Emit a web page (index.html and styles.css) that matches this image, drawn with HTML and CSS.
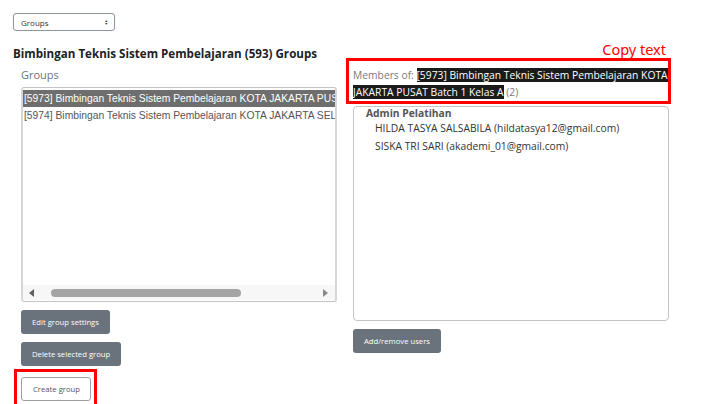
FILE: index.html
```html
<!DOCTYPE html>
<html lang="en">

<head>
    <meta charset="UTF-8">
    <meta name="viewport" content="width=device-width, initial-scale=1.0">
    <title>Groups</title>
    <link rel="stylesheet" href="styles.css">
</head>

<body>
    <div class="page">
        <div class="group-select">
            <span>Groups</span>
            <span class="updown">&#9650;<br>&#9660;</span>
        </div>

        <div class="columns">
            <div class="col-left">
                <h2 class="page-title">Bimbingan Teknis Sistem Pembelajaran (593) Groups</h2>
                <div class="col-label">Groups</div>
                <div class="listbox">
                    <div class="list-rows">
                        <div class="list-row selected">[5973] Bimbingan Teknis Sistem Pembelajaran KOTA JAKARTA PUSAT Batch 1 Kelas A (2)</div>
                        <div class="list-row">[5974] Bimbingan Teknis Sistem Pembelajaran KOTA JAKARTA SELATAN Batch 1 Kelas A (2)</div>
                    </div>
                    <div class="hscroll">
                        <span class="arrow-left"></span>
                        <span class="thumb"></span>
                        <span class="arrow-right"></span>
                    </div>
                </div>
                <div class="btn-stack">
                    <a href="#" class="btn btn-dark">Edit group settings</a>
                    <a href="#" class="btn btn-dark">Delete selected group</a>
                    <div class="mark">
                        <a href="#" class="btn btn-light">Create group</a>
                    </div>
                </div>
            </div>

            <div class="col-right">
                <div class="copy-note">Copy text</div>
                <div class="members-head">
                    Members of: <span class="hl">[5973] Bimbingan Teknis Sistem Pembelajaran KOTA JAKARTA PUSAT Batch 1 Kelas A</span> (2)
                </div>
                <div class="members-box">
                    <div class="role">Admin Pelatihan</div>
                    <div class="member">HILDA TASYA SALSABILA (hildatasya12@gmail.com)</div>
                    <div class="member">SISKA TRI SARI (akademi_01@gmail.com)</div>
                </div>
                <a href="#" class="btn btn-dark">Add/remove users</a>
            </div>
        </div>
    </div>
</body>

</html>
```

FILE: styles.css
```css
* {
    padding: 0;
    margin: 0;
    box-sizing: border-box;
    text-decoration: none;
}

body {
    font-family: "Open Sans", "Noto Sans", sans-serif;
    color: #1d2125;
    background: #fff;
    overflow: hidden;
}

.page {
    padding: 13px 0 0 13px;
}

.group-select {
    display: flex;
    align-items: center;
    justify-content: space-between;
    width: 102px;
    height: 18px;
    padding: 0 6px 0 7px;
    border: 1px solid #8f959e;
    border-radius: 3px;
    font-size: 8px;
    color: #333;
}

.updown {
    font-size: 3.5px;
    line-height: 3.5px;
    color: #333;
}

.columns {
    display: flex;
    margin-top: 10px;
}

.col-left {
    width: 333px;
}

.page-title {
    font-size: 11.6px;
    font-weight: 700;
    margin-top: 4px;
    line-height: 18px;
    color: #1d2125;
    white-space: nowrap;
}

.col-label {
    margin: 4px 0 0 8px;
    font-size: 11px;
    line-height: 16px;
    color: #6a737b;
}

.listbox {
    margin: 4px 0 0 8px;
    width: 316px;
    height: 215px;
    border: 1px solid #c4c4c8;
    border-left: 2px solid #d6d6da;
    border-right: 2px solid #d6d6da;
    border-radius: 3px;
    display: flex;
    flex-direction: column;
    overflow: hidden;
}

.list-rows {
    flex: 1;
    padding-top: 2px;
    overflow: hidden;
}

.list-row {
    height: 17px;
    line-height: 17px;
    padding-left: 1px;
    font-family: "Liberation Sans", Arial, sans-serif;
    font-size: 10.3px;
    color: #555;
    white-space: nowrap;
}

.list-row.selected {
    background: #6e6e6e;
    color: #fff;
}

.hscroll {
    display: flex;
    align-items: center;
    height: 15px;
    padding: 0 7px 0 6px;
    background: #f7f7f7;
    margin-bottom: 1px;
}

.arrow-left {
    width: 0;
    height: 0;
    border-top: 4px solid transparent;
    border-bottom: 4px solid transparent;
    border-right: 5px solid #616161;
}

.thumb {
    width: 190px;
    height: 8px;
    margin-left: 17px;
    border-radius: 4px;
    background: #a4a4a4;
}

.arrow-right {
    width: 0;
    height: 0;
    margin-left: auto;
    border-top: 4px solid transparent;
    border-bottom: 4px solid transparent;
    border-left: 5px solid #8a8a8a;
}

.btn-stack {
    display: flex;
    flex-direction: column;
    align-items: flex-start;
    gap: 8px;
    margin: 8px 0 0 8px;
}

.btn {
    display: inline-flex;
    align-items: center;
    height: 24px;
    padding: 0 11px;
    border-radius: 3px;
    font-size: 7.7px;
    white-space: nowrap;
}

.btn-dark {
    background: #6a737b;
    color: #fff;
}

.btn-light {
    background: #fff;
    border: 1px solid #9ca1a6;
    color: #555;
}

.mark {
    margin: -5px 0 0 -7px;
    padding: 3px 3px 4px 4px;
    border: 3px solid #f00;
}

.mark .btn {
    padding: 0 10px 0 11px;
}

.col-right {
    width: 325px;
}

.copy-note {
    text-align: right;
    padding-right: 5px;
    font-family: "Noto Sans", "Open Sans", sans-serif;
    font-size: 14.5px;
    line-height: 17px;
    color: #f00;
}

.members-head {
    width: 325px;
    height: 46px;
    border: 3px solid #f00;
    padding: 6px 0 0 4px;
    font-size: 10.3px;
    line-height: 17px;
    color: #7a7a7a;
}

.hl {
    background: #1b1b1b;
    color: #fff;
}

.members-box {
    margin: 2px 0 0 7px;
    width: 316px;
    height: 215px;
    border: 1px solid #c4c4c8;
    border-radius: 4px;
    padding: 0 0 0 12px;
    font-size: 10.3px;
    color: #444;
}

.role {
    font-weight: 700;
    line-height: 12px;
    color: #555;
}

.member {
    padding-left: 9px;
    line-height: 18px;
    color: #333;
}

.col-right .btn-dark {
    margin: 8px 0 0 7px;
}
```
